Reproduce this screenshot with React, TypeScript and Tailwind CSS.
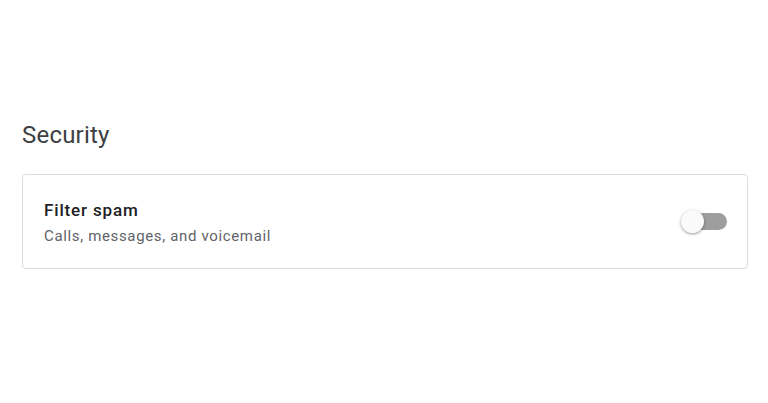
export default function App() {
  return (
    <div className="w-[768px] h-[403px] bg-white font-['Roboto',sans-serif] pt-[119px] pl-[22px] pr-[20px]">
      <h2 className="text-[24px] leading-[32px] text-[#3c4043] font-normal tracking-[0.2px]">Security</h2>

      <div className="mt-[23px] h-[95px] rounded-[4px] border border-[#dadce0] flex items-center justify-between pl-[21px] pr-[20px]">
        <div className="flex flex-col">
          <div className="text-[17px] leading-[24px] font-medium text-[#202124] tracking-[0.85px]">Filter spam</div>
          <div className="text-[15px] leading-[20px] text-[#5f6368] mt-[4px] tracking-[0.65px]">
            Calls, messages, and voicemail
          </div>
        </div>

        {/* Toggle (off) */}
        <button className="relative w-[46px] h-[24px] flex items-center">
          <span className="absolute right-0 w-[40px] h-[17px] rounded-full bg-[#9e9e9e]" />
          <span className="absolute left-0 w-[23px] h-[23px] rounded-full bg-[#fafafa] shadow-[0_1px_3px_rgba(0,0,0,0.4)]" />
        </button>
      </div>
    </div>
  )
}
